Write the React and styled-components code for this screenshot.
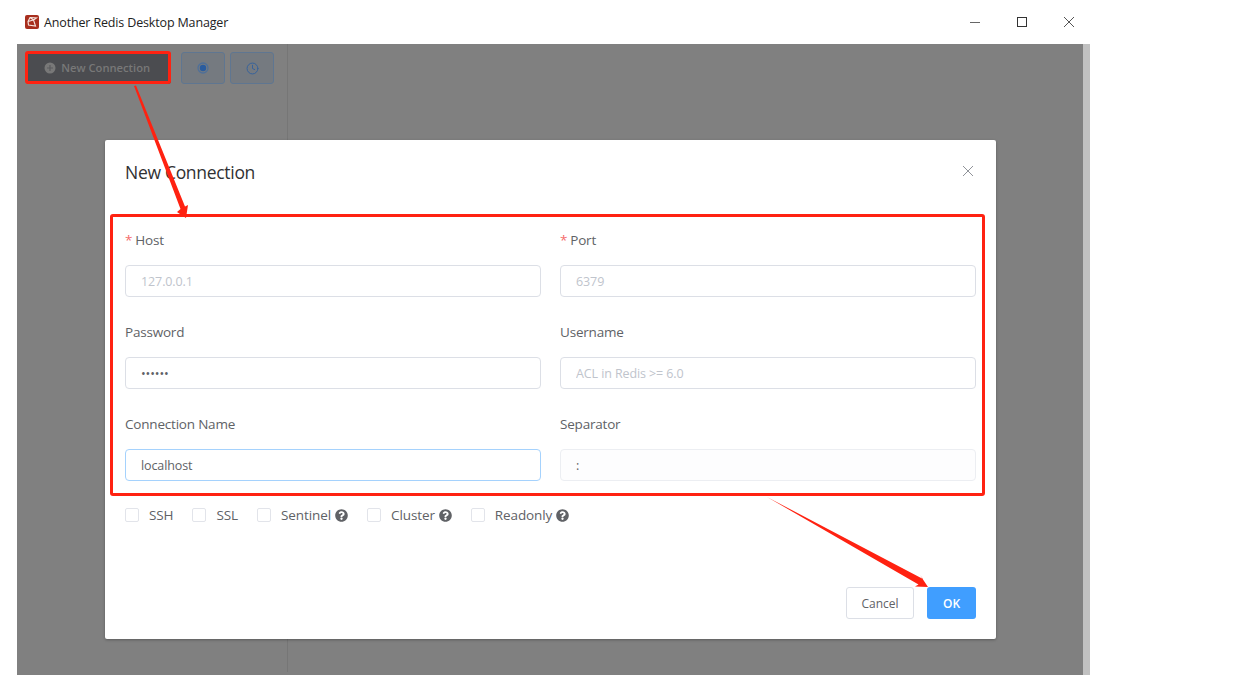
import React from "react";
import styled, { createGlobalStyle } from "styled-components";
import { FaQuestionCircle } from "react-icons/fa";
import { Clock } from "lucide-react";

const GlobalStyle = createGlobalStyle`
  html, body {
    margin: 0;
    padding: 0;
    background: #ffffff;
  }
  * {
    box-sizing: border-box;
  }
`;

const fields = [
  { label: "Host", required: true, placeholder: "127.0.0.1" },
  { label: "Port", required: true, placeholder: "6379" },
  { label: "Password", type: "password", value: "123456" },
  { label: "Username", placeholder: "ACL in Redis >= 6.0" },
  { label: "Connection Name", value: "localhost", focused: true },
  { label: "Separator", value: ":", muted: true },
];

const options = [
  { label: "SSH" },
  { label: "SSL" },
  { label: "Sentinel", help: true },
  { label: "Cluster", help: true },
  { label: "Readonly", help: true },
];

const App = () => {
  return (
    <Page>
      <GlobalStyle />
      <AppWindow>
        <TitleBar>
          <AppLogo viewBox="0 0 14 14">
            <rect width="14" height="14" rx="2" fill="#a82f1e" />
            <path
              d="M5 2.5 L11.5 3 L8.5 5 L10.5 11 L3.5 10 L3 6.5 Z M5 2.5 L8.5 5 M3 6.5 L8.5 5"
              fill="none"
              stroke="#f7e8e2"
              strokeWidth="1.1"
            />
          </AppLogo>
          <AppTitle>Another Redis Desktop Manager</AppTitle>
          <WindowControls>
            <WindowIcon viewBox="0 0 12 12">
              <path d="M1 6.5 H11" stroke="#666" />
            </WindowIcon>
            <WindowIcon viewBox="0 0 12 12">
              <rect x="1.5" y="1.5" width="9" height="9" fill="none" stroke="#333" />
            </WindowIcon>
            <WindowIcon viewBox="0 0 12 12">
              <path d="M1 1 L11 11 M11 1 L1 11" stroke="#555" />
            </WindowIcon>
          </WindowControls>
        </TitleBar>
        <Workspace>
          <Sidebar>
            <NewConnectionButton>
              <PlusBadge viewBox="0 0 12 12">
                <circle cx="6" cy="6" r="5.5" fill="#787878" />
                <path d="M6 3 V9 M3 6 H9" stroke="#5a5b5e" strokeWidth="1.2" />
              </PlusBadge>
              New Connection
            </NewConnectionButton>
            <ToolButton>
              <svg width="12" height="12" viewBox="0 0 12 12">
                <circle cx="6" cy="6" r="5" fill="none" stroke="#4f7099" strokeWidth="1.3" />
                <circle cx="6" cy="6" r="3.2" fill="#2a5c9e" />
              </svg>
            </ToolButton>
            <ToolButton>
              <Clock size={13} color="#34629c" strokeWidth={1.8} />
            </ToolButton>
          </Sidebar>
          <Scrollbar />
          <Dialog>
            <DialogHeader>
              <DialogTitle>New Connection</DialogTitle>
              <CloseIcon viewBox="0 0 12 12">
                <path d="M1 1 L11 11 M11 1 L1 11" stroke="#909399" />
              </CloseIcon>
            </DialogHeader>
            <FormGrid>
              {fields.map((f) => (
                <Field key={f.label}>
                  <FieldLabel>
                    {f.required && <Asterisk>*</Asterisk>}
                    {f.label}
                  </FieldLabel>
                  <TextInput
                    readOnly
                    type={f.type || "text"}
                    placeholder={f.placeholder}
                    value={f.value || ""}
                    $focused={f.focused}
                    $muted={f.muted}
                  />
                </Field>
              ))}
            </FormGrid>
            <OptionsRow>
              {options.map((o) => (
                <Option key={o.label}>
                  <CheckBox />
                  <OptionLabel>{o.label}</OptionLabel>
                  {o.help && <HelpIcon size={13} color="#606266" />}
                </Option>
              ))}
            </OptionsRow>
            <DialogFooter>
              <CancelButton>Cancel</CancelButton>
              <OkButton>OK</OkButton>
            </DialogFooter>
          </Dialog>
        </Workspace>
      </AppWindow>

      {/* red markup drawn over the screenshot */}
      <ButtonHighlight />
      <FormHighlight />
      <ArrowLayer viewBox="0 0 1236 695">
        <polygon
          fill="#ff2211"
          points="134,86 136,85.5 185,206.5 188,205 186,218 177,212 180.5,209"
        />
        <polygon
          fill="#ff2211"
          points="767,497 923,579 920,575 928,587 915,586.5 918.5,584.5"
        />
      </ArrowLayer>
    </Page>
  );
};

export default App;

const Page = styled.div`
  position: relative;
  width: 1236px;
  height: 695px;
  overflow: hidden;
  background: #ffffff;
  font-family: "Open Sans", "Noto Sans", sans-serif;
`;

const AppWindow = styled.div`
  margin-left: 17px;
  width: 1073px;
  height: 675px;
  display: flex;
  flex-direction: column;
`;

const TitleBar = styled.div`
  height: 44px;
  flex: none;
  display: flex;
  align-items: center;
  padding: 14px 0 14px 8px;
  background: #ffffff;
`;

const AppLogo = styled.svg`
  width: 14px;
  height: 14px;
  margin-right: 5px;
`;

const AppTitle = styled.span`
  font-size: 12.5px;
  letter-spacing: -0.15px;
  color: #222222;
`;

const WindowControls = styled.div`
  margin-left: auto;
  margin-right: 15px;
  display: flex;
  gap: 35px;
`;

const WindowIcon = styled.svg`
  width: 12px;
  height: 12px;
`;

const Workspace = styled.div`
  position: relative;
  flex: 1;
  display: flex;
  background: #808080;
`;

const Sidebar = styled.div`
  width: 271px;
  margin-bottom: 3px;
  display: flex;
  align-items: flex-start;
  gap: 5px;
  padding: 8px 13px 0 9px;
  border-right: 1px solid #767676;
`;

const NewConnectionButton = styled.div`
  width: 146px;
  height: 32px;
  margin-right: 5px;
  padding: 0 3px 1px 0;
  display: flex;
  align-items: center;
  justify-content: center;
  gap: 5px;
  background: #4b4c50;
  border-radius: 3px;
  color: #787878;
  font-size: 11.2px;
  font-weight: 600;
`;

const PlusBadge = styled.svg`
  width: 12px;
  height: 12px;
`;

const ToolButton = styled.div`
  width: 44px;
  height: 32px;
  display: flex;
  align-items: center;
  justify-content: center;
  background: #757a80;
  border: 1px solid #5f7691;
  border-radius: 3px;
`;

const Scrollbar = styled.div`
  margin-left: auto;
  width: 7px;
  background: #c1c1c1;
`;

const Dialog = styled.div`
  position: absolute;
  left: 88px;
  top: 96px;
  width: 891px;
  height: 499px;
  display: flex;
  flex-direction: column;
  padding: 20px;
  background: #ffffff;
  border-radius: 2px;
  box-shadow: 0 1px 3px rgba(0, 0, 0, 0.3);
`;

const DialogHeader = styled.div`
  display: flex;
  align-items: center;
  justify-content: space-between;
  height: 24px;
  margin-bottom: 41px;
`;

const DialogTitle = styled.div`
  font-size: 17.5px;
  letter-spacing: -0.3px;
  color: #303133;
`;

const CloseIcon = styled.svg`
  width: 12px;
  height: 12px;
  margin: 0 2px 2px 0;
`;

const FormGrid = styled.div`
  display: grid;
  grid-template-columns: 416px 416px;
  column-gap: 19px;
  row-gap: 20px;
`;

const Field = styled.div`
  display: flex;
  flex-direction: column;
`;

const FieldLabel = styled.label`
  height: 40px;
  padding-bottom: 10px;
  display: flex;
  align-items: center;
  font-size: 13.5px;
  letter-spacing: -0.2px;
  color: #606266;
`;

const Asterisk = styled.span`
  color: #f56c6c;
  margin-right: 3px;
`;

const TextInput = styled.input`
  width: 100%;
  height: 32px;
  padding: 0 15px;
  outline: none;
  font-family: inherit;
  font-size: 12.5px;
  letter-spacing: -0.1px;
  color: #606266;
  border-radius: 4px;
  border: 1px solid ${(p) => (p.$focused ? "#a5d2fd" : p.$muted ? "#eceef2" : "#dcdfe6")};
  background: ${(p) => (p.$muted ? "#fdfdfe" : "#ffffff")};
  &::placeholder {
    color: #c0c4cc;
  }
`;

const OptionsRow = styled.div`
  display: flex;
  align-items: center;
  gap: 19px;
  margin-top: 25px;
`;

const Option = styled.div`
  display: flex;
  align-items: center;
`;

const CheckBox = styled.span`
  width: 14px;
  height: 14px;
  margin-right: 10px;
  border: 1px solid #e2e4ea;
  border-radius: 2px;
`;

const OptionLabel = styled.span`
  font-size: 13.5px;
  font-weight: 500;
  letter-spacing: -0.1px;
  color: #606266;
`;

const HelpIcon = styled(FaQuestionCircle)`
  margin-left: 4px;
`;

const DialogFooter = styled.div`
  margin-top: auto;
  display: flex;
  justify-content: flex-end;
  gap: 13px;
`;

const FooterButton = styled.div`
  height: 32px;
  display: flex;
  align-items: center;
  justify-content: center;
  border-radius: 3px;
  font-size: 12px;
  font-weight: 500;
`;

const CancelButton = styled(FooterButton)`
  width: 68px;
  border: 1px solid #dcdfe6;
  color: #606266;
  background: #ffffff;
`;

const OkButton = styled(FooterButton)`
  width: 49px;
  font-weight: 600;
  color: #ffffff;
  background: #409eff;
`;

const Highlight = styled.div`
  position: absolute;
  border: 3px solid #ff2211;
  border-radius: 3px;
`;

const ButtonHighlight = styled(Highlight)`
  left: 25px;
  top: 51px;
  width: 146px;
  height: 33px;
`;

const FormHighlight = styled(Highlight)`
  left: 110px;
  top: 214px;
  width: 875px;
  height: 282px;
`;

const ArrowLayer = styled.svg`
  position: absolute;
  left: 0;
  top: 0;
  width: 1236px;
  height: 695px;
  pointer-events: none;
`;
